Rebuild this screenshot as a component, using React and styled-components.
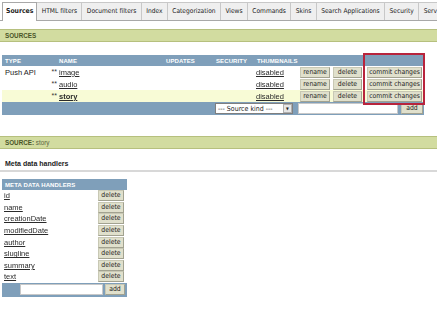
import React from "react";
import styled, { createGlobalStyle } from "styled-components";

const Global = createGlobalStyle`
  html, body { margin: 0; padding: 0; background: #fff; }
  body { font-family: "Liberation Sans", Arial, sans-serif; font-size: 7.5px; color: #222; }
`;

const Page = styled.div`
  width: 437px;
  overflow: hidden;
`;

const TabBar = styled.div`
  display: flex;
  padding: 2px 0 0 2px;
  border-bottom: 1px solid #a8a8a8;
  white-space: nowrap;
`;

const Tab = styled.div`
  flex: none;
  height: 17px;
  line-height: 17px;
  padding: 0 ${(p) => (p.$active ? 3 : 4.4)}px;
  font-family: "DejaVu Sans Condensed", "Liberation Sans", sans-serif;
  font-size: ${(p) => (p.$active ? 6.8 : 6.6)}px;
  color: #222;
  background: ${(p) => (p.$active ? "#fff" : "#efefef")};
  font-weight: ${(p) => (p.$active ? "bold" : "normal")};
  border: 1px solid #c8c8c8;
  border-bottom: none;
  border-left: none;
  margin-bottom: ${(p) => (p.$active ? "-1px" : "0")};
  ${(p) => (p.$active ? "border: 1px solid #a8a8a8; border-bottom: none; height:18px;" : "")}
`;

const SectionBar = styled.div`
  margin-top: ${(p) => p.$mt}px;
  height: 11px;
  line-height: 11px;
  background: #d2dca0;
  border-top: 1px solid #b6c07e;
  border-bottom: 1px solid #b6c07e;
  padding-left: 5px;
  font-size: 6.3px;
  color: #5a6440;
  b { font-weight: bold; text-transform: uppercase; color: #4a5428; }
`;

const TableWrap = styled.div`
  position: relative;
  margin: ${(p) => p.$m};
  width: ${(p) => p.$w}px;
`;

const Grid = styled.table`
  width: 100%;
  border-collapse: collapse;
  table-layout: fixed;
`;

const Head = styled.th`
  background: #7f9fba;
  color: #fff;
  font-size: 6px;
  font-weight: bold;
  text-align: left;
  height: 11px;
  padding: 0 0 0 3px;
  letter-spacing: 0.1px;
  white-space: nowrap;
  overflow: hidden;
`;

const Cell = styled.td`
  height: ${(p) => p.$h || 12}px;
  padding: 0 0 0 ${(p) => (p.$pl === undefined ? 3 : p.$pl)}px;
  font-size: 7.5px;
  white-space: nowrap;
  vertical-align: middle;
  background: ${(p) => (p.$hl ? "#f8fbd6" : "transparent")};
  text-align: ${(p) => p.$align || "left"};
`;

const FootCell = styled.td`
  background: #7f9fba;
  height: ${(p) => p.$h || 13}px;
  padding: 0 ${(p) => p.$pr || 0}px 0 ${(p) => p.$pl || 0}px;
  white-space: nowrap;
  vertical-align: middle;
`;

const FootRow = styled.div`
  display: flex;
  align-items: center;
  gap: ${(p) => p.$gap}px;
`;

const Link = styled.a`
  display: inline-block;
  color: #2a2a2a;
  text-decoration: underline;
  font-weight: ${(p) => (p.$bold ? "bold" : "normal")};
  font-size: 7.5px;
  filter: grayscale(1);
`;

const Stars = styled.span`
  font-size: 7px;
  color: #333;
  vertical-align: 1px;
`;

const Btn = styled.button`
  font-family: "DejaVu Sans Condensed", "Liberation Sans", sans-serif;
  font-size: 6.8px;
  height: 11px;
  line-height: 9px;
  padding: 0;
  width: ${(p) => p.$w}px;
  flex: none;
  background: #e0e0cc;
  border: 1px solid #c8c8b4;
  border-right-color: #a2a290;
  border-bottom-color: #a2a290;
  color: #222;
  display: inline-block;
  vertical-align: middle;
`;

const SelectBox = styled.div`
  display: inline-flex;
  align-items: center;
  justify-content: space-between;
  width: 78px;
  height: 11px;
  background: #fff;
  border: 1px solid #7f7f7f;
  font-family: "DejaVu Sans Condensed", "Liberation Sans", sans-serif;
  font-size: 7px;
  padding-left: 2px;
  box-sizing: border-box;
  vertical-align: middle;
`;

const Arrow = styled.span`
  width: 9px;
  height: 9px;
  background: #e6e6e6;
  border: 1px solid #b0b0b0;
  box-sizing: border-box;
  display: flex;
  align-items: center;
  justify-content: center;
  font-size: 4px;
`;

const Input = styled.div`
  flex: none;
  width: ${(p) => p.$w}px;
  height: 11px;
  background: #fff;
  border: 1px solid #c8c8c8;
  box-sizing: border-box;
`;

const Highlight = styled.div`
  position: absolute;
  left: 361px;
  top: -2px;
  width: 62px;
  height: 52px;
  box-sizing: border-box;
  border: 2px solid #b8243c;
  pointer-events: none;
`;

const SubTitle = styled.div`
  margin-top: 11px;
  padding: 0 0 3px 5px;
  font-size: 7px;
  font-weight: bold;
  border-bottom: 2px solid #d8d8d8;
  color: #222;
`;

const sources = [
  { type: "Push API", name: "image" },
  { type: "", name: "audio" },
  { type: "", name: "story", active: true },
];

const handlers = ["id", "name", "creationDate", "modifiedDate", "author", "slugline", "summary", "text"];

const tabs = [
  "Sources",
  "HTML filters",
  "Document filters",
  "Index",
  "Categorization",
  "Views",
  "Commands",
  "Skins",
  "Search Applications",
  "Security",
  "Serv",
];

export default function App() {
  return (
    <Page>
      <Global />
      <TabBar>
        {tabs.map((t, i) => (
          <Tab key={t} $active={i === 0}>
            {t}
          </Tab>
        ))}
      </TabBar>

      <SectionBar $mt={8}>
        <b>Sources</b>
      </SectionBar>

      <TableWrap $m="13px 0 0 2px" $w={422}>
        <Grid>
          <colgroup>
            <col style={{ width: 46 }} />
            <col style={{ width: 9 }} />
            <col style={{ width: 106 }} />
            <col style={{ width: 50 }} />
            <col style={{ width: 41 }} />
            <col style={{ width: 44 }} />
            <col style={{ width: 33 }} />
            <col style={{ width: 33 }} />
            <col style={{ width: 60 }} />
          </colgroup>
          <thead>
            <tr>
              <Head>TYPE</Head>
              <Head />
              <Head style={{ paddingLeft: 2 }}>NAME</Head>
              <Head>UPDATES</Head>
              <Head>SECURITY</Head>
              <Head colSpan={4}>THUMBNAILS</Head>
            </tr>
          </thead>
          <tbody>
            {sources.map((s) => (
              <tr key={s.name}>
                <Cell $hl={s.active}>{s.type}</Cell>
                <Cell $hl={s.active} $pl={0} $align="right">
                  <Stars>**</Stars>
                </Cell>
                <Cell $hl={s.active} $pl={2}>
                  <Link $bold={s.active}>{s.name}</Link>
                </Cell>
                <Cell $hl={s.active} />
                <Cell $hl={s.active} />
                <Cell $hl={s.active} $pl={2}>
                  <Link>disabled</Link>
                </Cell>
                <Cell $hl={s.active} $pl={2}>
                  <Btn $w={30}>rename</Btn>
                </Cell>
                <Cell $hl={s.active} $pl={2}>
                  <Btn $w={29}>delete</Btn>
                </Cell>
                <Cell $hl={s.active} $pl={3}>
                  <Btn $w={55}>commit changes</Btn>
                </Cell>
              </tr>
            ))}
            <tr>
              <FootCell colSpan={4} />
              <FootCell colSpan={2} $pl={2}>
                <SelectBox>
                  --- Source kind ---
                  <Arrow>▼</Arrow>
                </SelectBox>
              </FootCell>
              <FootCell colSpan={3} $pl={0}>
                <FootRow $gap={3}>
                  <Input $w={100} />
                  <Btn $w={22}>add</Btn>
                </FootRow>
              </FootCell>
            </tr>
          </tbody>
        </Grid>
        <Highlight />
      </TableWrap>

      <SectionBar $mt={21}>
        <b>Source:</b> story
      </SectionBar>

      <SubTitle>Meta data handlers</SubTitle>

      <TableWrap $m="7px 0 0 2px" $w={125}>
        <Grid>
          <colgroup>
            <col style={{ width: 95 }} />
            <col style={{ width: 30 }} />
          </colgroup>
          <thead>
            <tr>
              <Head colSpan={2}>META DATA HANDLERS</Head>
            </tr>
          </thead>
          <tbody>
            {handlers.map((h) => (
              <tr key={h}>
                <Cell $h={11.6} $pl={2}>
                  <Link>{h}</Link>
                </Cell>
                <Cell $h={11.6} $pl={1}>
                  <Btn $w={26}>delete</Btn>
                </Cell>
              </tr>
            ))}
            <tr>
              <FootCell colSpan={2} $pl={18} $h={14}>
                <FootRow $gap={2}>
                  <Input $w={83} />
                  <Btn $w={20}>add</Btn>
                </FootRow>
              </FootCell>
            </tr>
          </tbody>
        </Grid>
      </TableWrap>
    </Page>
  );
}
